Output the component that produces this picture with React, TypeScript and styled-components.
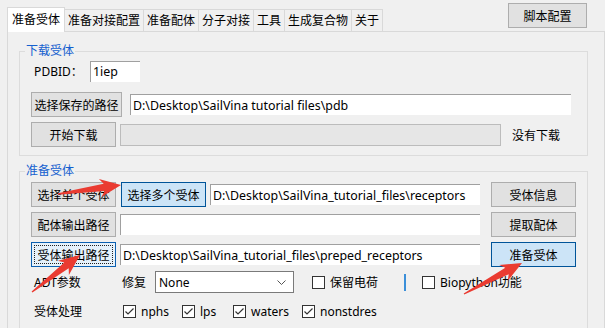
import React from 'react';
import styled, { createGlobalStyle, css } from 'styled-components';

const GlobalStyle = createGlobalStyle`
  html, body {
    margin: 0;
    padding: 0;
    background: #f0f0f0;
  }
  body {
    font-family: "Noto Sans", "Noto Sans CJK SC", sans-serif;
    font-size: 12px;
    color: #000;
  }
`;

const Root = styled.div`
  position: relative;
  width: 605px;
  height: 328px;
  overflow: hidden;
  background: #f0f0f0;
`;

const TabHeader = styled.div`
  display: flex;
  align-items: flex-end;
  height: 31px;
  padding-left: 7px;
  box-sizing: border-box;
`;

const Tab = styled.div<{ $active?: boolean }>`
  display: flex;
  align-items: center;
  box-sizing: border-box;
  height: ${(p) => (p.$active ? 25 : 22)}px;
  padding: 0 ${(p) => (p.$active ? 4 : 3)}px;
  border: 1px solid #d9d9d9;
  border-bottom: none;
  white-space: nowrap;
  line-height: 1;
  background: ${(p) => (p.$active ? '#fff' : '#f0f0f0')};
  & + & {
    margin-left: -1px;
  }
  ${(p) =>
    p.$active &&
    css`
      position: relative;
      z-index: 1;
      margin-bottom: -1px;
    `}
`;

const ScriptButton = styled.button`
  align-self: flex-start;
  margin: 3px 18px 0 auto;
  width: 79px;
  height: 25px;
  border: 1px solid #adadad;
  background: #e1e1e1;
  font: inherit;
  color: #000;
  padding: 0;
`;

const TabPage = styled.div`
  margin-left: 7px;
  width: 598px;
  height: 300px;
  box-sizing: border-box;
  border: 1px solid #d9d9d9;
  border-bottom: none;
  padding: 19px 16px 0 11px;
`;

const GroupBox = styled.div<{ $mt?: number; $pb?: number }>`
  display: flex;
  flex-direction: column;
  border: 1px solid #dcdcdc;
  margin-top: ${(p) => p.$mt ?? 0}px;
  padding: 0 0 ${(p) => p.$pb ?? 0}px 11px;
`;

const GroupTitle = styled.div`
  align-self: flex-start;
  margin: -9px 0 0 -6px;
  padding: 0 1px;
  line-height: 16px;
  color: #1560cf;
  background: #f0f0f0;
`;

const Row = styled.div<{ $h: number; $mt: number }>`
  display: flex;
  align-items: center;
  height: ${(p) => p.$h}px;
  margin-top: ${(p) => p.$mt}px;
`;

const Button = styled.button<{ $w: number; $ml?: number; $variant?: 'primary' | 'focus' }>`
  box-sizing: border-box;
  width: ${(p) => p.$w}px;
  height: 25px;
  margin-left: ${(p) => p.$ml ?? 0}px;
  padding: 0;
  font: inherit;
  color: #000;
  white-space: nowrap;
  border: 1px solid #adadad;
  background: #e1e1e1;
  ${(p) =>
    p.$variant === 'primary' &&
    css`
      border-color: #005499;
      background: #cce4f7;
    `}
  ${(p) =>
    p.$variant === 'focus' &&
    css`
      border-color: #0b5fb0;
      background: #e5f1fb;
      outline: 1px dotted #222;
      outline-offset: -4px;
    `}
`;

const TextBox = styled.div<{ $w: number; $ml?: number; $h?: number }>`
  box-sizing: border-box;
  display: flex;
  align-items: center;
  width: ${(p) => p.$w}px;
  height: ${(p) => p.$h ?? 21}px;
  margin-left: ${(p) => p.$ml ?? 0}px;
  padding-left: 2px;
  font-size: 12.4px;
  background: #fff;
  border-top: 1px solid #a0a0a0;
  border-left: 1px solid #a0a0a0;
  white-space: nowrap;
  overflow: hidden;
`;

const Progress = styled.div<{ $w: number; $ml: number }>`
  box-sizing: border-box;
  width: ${(p) => p.$w}px;
  height: 22px;
  margin-left: ${(p) => p.$ml}px;
  background: #e6e6e6;
  border: 1px solid #bcbcbc;
`;

const Label = styled.span<{ $w?: number; $ml?: number }>`
  flex: none;
  width: ${(p) => (p.$w ? `${p.$w}px` : 'auto')};
  margin-left: ${(p) => p.$ml ?? 0}px;
  white-space: nowrap;
`;

const Combo = styled.div`
  box-sizing: border-box;
  display: flex;
  align-items: center;
  justify-content: space-between;
  width: 139px;
  height: 22px;
  padding: 0 7px 0 3px;
  background: #fff;
  border: 1px solid #7a7a7a;
`;

const CheckItem = styled.label<{ $w?: number; $ml?: number }>`
  display: flex;
  align-items: center;
  gap: 5px;
  flex: none;
  width: ${(p) => (p.$w ? `${p.$w}px` : 'auto')};
  margin-left: ${(p) => p.$ml ?? 0}px;
  white-space: nowrap;
`;

const Box = styled.span`
  display: flex;
  box-sizing: border-box;
  width: 13px;
  height: 13px;
  border: 1px solid #333;
  background: #fff;
`;

const Divider = styled.span`
  width: 2px;
  height: 17px;
  margin-left: 26px;
  background: #3b8fd9;
`;

const ArrowLayer = styled.svg`
  position: absolute;
  left: 0;
  top: 0;
  pointer-events: none;
`;

const Check = ({ checked, label, w, ml }: { checked?: boolean; label: string; w?: number; ml?: number }) => (
  <CheckItem $w={w} $ml={ml}>
    <Box>
      {checked && (
        <svg width="11" height="11" viewBox="0 0 11 11">
          <polyline points="1.5,5.5 4,8 9.5,2.5" fill="none" stroke="#333" strokeWidth="1.2" />
        </svg>
      )}
    </Box>
    <span>{label}</span>
  </CheckItem>
);

// red annotation arrow, thin at the tail and widening to a notched head
function arrowPoints(tx: number, ty: number, px: number, py: number) {
  const len = Math.hypot(px - tx, py - ty);
  const dx = (px - tx) / len;
  const dy = (py - ty) / len;
  const nx = -dy;
  const ny = dx;
  const headL = 21;
  const bx = px - dx * headL;
  const by = py - dy * headL;
  const pt = (x: number, y: number) => `${x.toFixed(1)},${y.toFixed(1)}`;
  return [
    pt(tx + nx * 0.7, ty + ny * 0.7),
    pt(bx + dx * 4 + nx * 3.6, by + dy * 4 + ny * 3.6),
    pt(bx + nx * 9, by + ny * 9),
    pt(px, py),
    pt(bx - nx * 9, by - ny * 9),
    pt(bx + dx * 4 - nx * 3.6, by + dy * 4 - ny * 3.6),
    pt(tx - nx * 0.7, ty - ny * 0.7),
  ].join(' ');
}

const arrows = [
  [58, 194, 121, 185],
  [32, 292, 80, 255],
  [464, 294, 522, 263],
];

export default function App() {
  return (
    <>
      <GlobalStyle />
      <Root>
        <TabHeader>
          <Tab $active>准备受体</Tab>
          <Tab>准备对接配置</Tab>
          <Tab>准备配体</Tab>
          <Tab>分子对接</Tab>
          <Tab>工具</Tab>
          <Tab>生成复合物</Tab>
          <Tab>关于</Tab>
          <ScriptButton>脚本配置</ScriptButton>
        </TabHeader>

        <TabPage>
          <GroupBox $pb={8}>
            <GroupTitle>下载受体</GroupTitle>
            <Row $h={22} $mt={1}>
              <Label $w={59}>&nbsp;PDBID：</Label>
              <TextBox $w={50}>1iep</TextBox>
            </Row>
            <Row $h={25} $mt={10}>
              <Button $w={91}>选择保存的路径</Button>
              <TextBox $w={441} $ml={8}>
                D:\Desktop\SailVina tutorial files\pdb
              </TextBox>
            </Row>
            <Row $h={25} $mt={5}>
              <Button $w={85}>开始下载</Button>
              <Progress $w={381} $ml={4} />
              <Label $ml={11}>没有下载</Label>
            </Row>
          </GroupBox>

          <GroupBox $mt={15} $pb={8}>
            <GroupTitle>准备受体</GroupTitle>
            <Row $h={25} $mt={3}>
              <Button $w={85}>选择单个受体</Button>
              <Button $w={85} $ml={5} $variant="primary">
                选择多个受体
              </Button>
              <TextBox $w={270} $ml={4}>
                D:\Desktop\SailVina_tutorial_files\receptors
              </TextBox>
              <Button $w={85} $ml={11}>
                受体信息
              </Button>
            </Row>
            <Row $h={25} $mt={5}>
              <Button $w={85}>配体输出路径</Button>
              <TextBox $w={360} $ml={4} />
              <Button $w={85} $ml={11}>
                提取配体
              </Button>
            </Row>
            <Row $h={25} $mt={5}>
              <Button $w={85} $variant="focus">
                受体输出路径
              </Button>
              <TextBox $w={360} $ml={4}>
                D:\Desktop\SailVina_tutorial_files\preped_receptors
              </TextBox>
              <Button $w={85} $ml={11} $variant="primary">
                准备受体
              </Button>
            </Row>
            <Row $h={22} $mt={4}>
              <Label $w={91}>&nbsp;ADT参数</Label>
              <Label $w={33}>修复</Label>
              <Combo>
                <span>None</span>
                <svg width="9" height="5" viewBox="0 0 9 5">
                  <polyline points="0.5,0.5 4.5,4.5 8.5,0.5" fill="none" stroke="#555" strokeWidth="1" />
                </svg>
              </Combo>
              <Check label="保留电荷" ml={18} />
              <Divider />
              <Check label="Biopython功能" ml={16} />
            </Row>
            <Row $h={22} $mt={7}>
              <Label $w={92}>&nbsp;受体处理</Label>
              <Check checked label="nphs" w={59} />
              <Check checked label="lps" w={51} />
              <Check checked label="waters" w={69} />
              <Check checked label="nonstdres" />
            </Row>
          </GroupBox>
        </TabPage>

        <ArrowLayer width={605} height={328} viewBox="0 0 605 328">
          {arrows.map(([tx, ty, px, py], i) => (
            <polygon key={i} points={arrowPoints(tx, ty, px, py)} fill="#ea3b31" />
          ))}
        </ArrowLayer>
      </Root>
    </>
  );
}
